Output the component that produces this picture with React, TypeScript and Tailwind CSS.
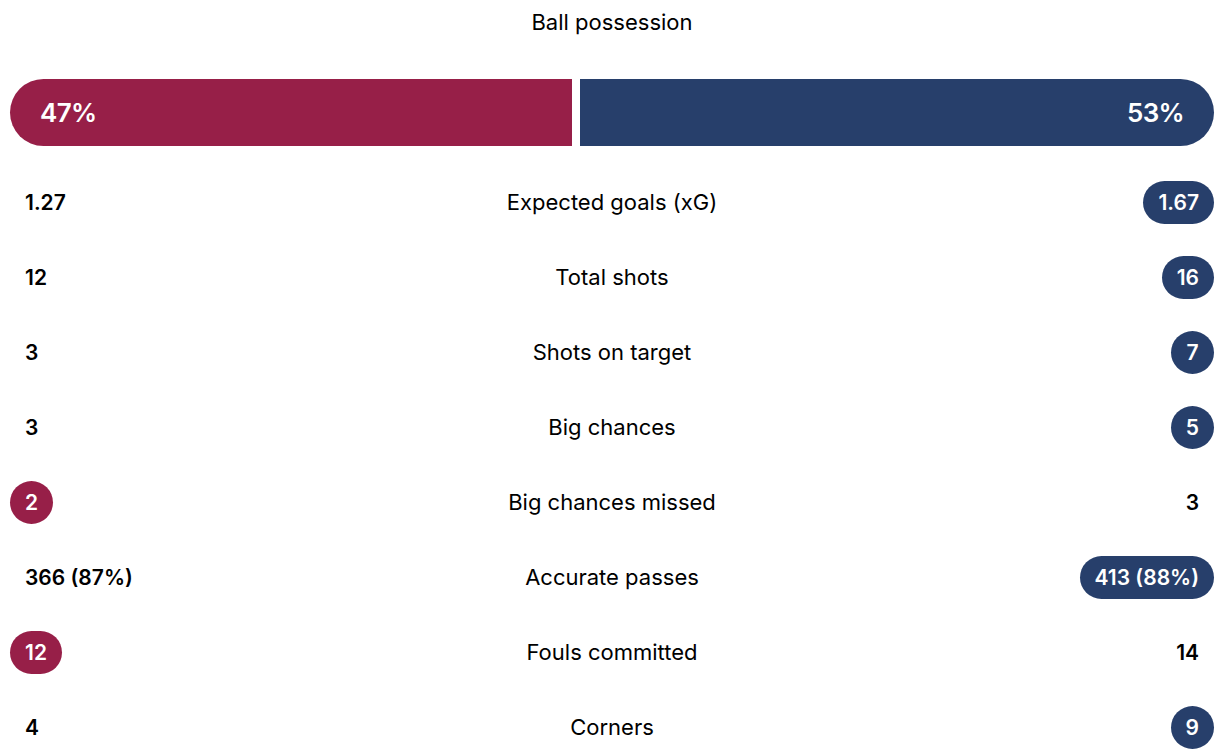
const RED = "bg-[#971f48]";
const BLUE = "bg-[#273f6b]";

type Stat = {
  label: string;
  home: string;
  away: string;
  highlight?: "home" | "away";
};

const stats: Stat[] = [
  { label: "Expected goals (xG)", home: "1.27", away: "1.67", highlight: "away" },
  { label: "Total shots", home: "12", away: "16", highlight: "away" },
  { label: "Shots on target", home: "3", away: "7", highlight: "away" },
  { label: "Big chances", home: "3", away: "5", highlight: "away" },
  { label: "Big chances missed", home: "2", away: "3", highlight: "home" },
  { label: "Accurate passes", home: "366 (87%)", away: "413 (88%)", highlight: "away" },
  { label: "Fouls committed", home: "12", away: "14", highlight: "home" },
  { label: "Corners", home: "4", away: "9", highlight: "away" },
];

function Value({ value, active, color }: { value: string; active: boolean; color: string }) {
  return (
    <span
      className={`inline-flex h-[43px] min-w-[43px] items-center justify-center rounded-full px-[15px] text-[21px] font-semibold leading-none ${
        active ? `${color} text-white` : "text-black"
      }`}
    >
      {value}
    </span>
  );
}

export default function App() {
  const home = 47;
  return (
    <div
      className="w-[1219px] h-[756px] bg-white pl-[10px] pr-[5px] text-black overflow-hidden"
      style={{ fontFamily: "Inter, 'Noto Sans', sans-serif" }}
    >
      <div className="flex h-[44px] items-center justify-center text-[22px] leading-none">
        Ball possession
      </div>

      <div className="mt-[35px] flex h-[67px] gap-[8px]">
        <div
          className={`${RED} flex shrink-0 items-center rounded-l-full pl-[30px] text-[26px] font-semibold tracking-tight text-white`}
          style={{ width: `calc((100% - 8px) * ${home / 100})` }}
        >
          47%
        </div>
        <div className={`${BLUE} flex flex-1 items-center justify-end rounded-r-full pr-[30px] text-[26px] font-semibold tracking-tight text-white`}>
          53%
        </div>
      </div>

      <div className="mt-[19px] flex flex-col">
        {stats.map((s) => (
          <div key={s.label} className="grid h-[75px] grid-cols-[1fr_auto_1fr] items-center">
            <div className="flex justify-start">
              <Value value={s.home} active={s.highlight === "home"} color={RED} />
            </div>
            <div className="text-center text-[22px]">{s.label}</div>
            <div className="flex justify-end">
              <Value value={s.away} active={s.highlight === "away"} color={BLUE} />
            </div>
          </div>
        ))}
      </div>
    </div>
  );
}
